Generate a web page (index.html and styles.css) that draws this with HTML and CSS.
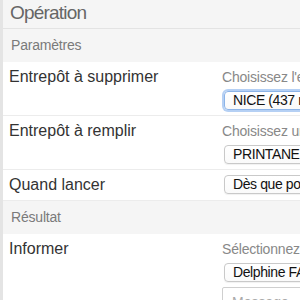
FILE: index.html
```html
<!DOCTYPE html>
<html lang="fr">
<head>
    <meta charset="UTF-8">
    <meta name="viewport" content="width=device-width, initial-scale=1.0">
    <title>Opération</title>
    <link rel="stylesheet" href="styles.css">
</head>
<body>
    <div class="panel">
        <div class="panel-title">Opération</div>

        <div class="section">Paramètres</div>
        <div class="row">
            <div class="label">Entrepôt à supprimer</div>
            <div class="field">
                <div class="hint">Choisissez l'entrepôt à supprimer</div>
                <div class="select focus">NICE (437 références)</div>
            </div>
        </div>
        <div class="row">
            <div class="label">Entrepôt à remplir</div>
            <div class="field">
                <div class="hint">Choisissez un entrepôt de destination</div>
                <div class="select">PRINTANE (512 références)</div>
            </div>
        </div>
        <div class="row">
            <div class="label">Quand lancer</div>
            <div class="field">
                <div class="select">Dès que possible</div>
            </div>
        </div>

        <div class="section">Résultat</div>
        <div class="row last">
            <div class="label">Informer</div>
            <div class="field">
                <div class="hint">Sélectionnez les personnes à informer</div>
                <div class="select">Delphine FAURE</div>
                <div class="textarea">Message...</div>
            </div>
        </div>
    </div>
</body>
</html>
```

FILE: styles.css
```css
body {
    margin: 0;
    background: #e4e4e4;
    font-family: "Liberation Sans", Arial, sans-serif;
    overflow: hidden;
}
.panel {
    margin-left: 3px;
    width: 700px;
    background: white;
}
.panel-title {
    height: 28px;
    line-height: 26px;
    padding-left: 7px;
    font-size: 19px;
    letter-spacing: -0.8px;
    color: #666;
    background: #f5f5f5;
    border-bottom: 1px solid #e3e3e3;
}
.section {
    height: 33px;
    line-height: 33px;
    padding-left: 8px;
    font-size: 14px;
    letter-spacing: -0.2px;
    color: #7a7a7a;
    background: #f5f5f5;
}
.row {
    display: grid;
    grid-template-columns: 213px 1fr;
    padding: 5px 0 5px 6px;
    border-bottom: 1px solid #ececec;
}
.row.last {
    border-bottom: none;
}
.label {
    font-size: 16px;
    line-height: 20px;
    color: #333;
}
.hint {
    font-size: 14px;
    line-height: 20px;
    letter-spacing: -0.2px;
    color: #888;
    white-space: nowrap;
}
.hint + .select {
    margin-top: 4px;
}
.select {
    box-sizing: border-box;
    height: 19px;
    width: 320px;
    margin-left: 2px;
    padding-left: 8px;
    font-size: 14px;
    line-height: 17px;
    letter-spacing: -0.4px;
    color: #111;
    background: linear-gradient(#ffffff, #fafafa);
    border: 1px solid #c9c9c9;
    border-radius: 4px;
    box-shadow: 0 1px 1px rgba(0,0,0,0.06);
    white-space: nowrap;
}
.select.focus {
    border-color: #8cb4e8;
    box-shadow: 0 0 0 2px rgba(120,170,235,0.55);
}
.textarea {
    box-sizing: border-box;
    margin-top: 5px;
    height: 60px;
    width: 330px;
    padding: 6px 9px;
    font-size: 14px;
    color: #aaa;
    border: 1px solid #cfcfcf;
    border-radius: 2px;
}
```
